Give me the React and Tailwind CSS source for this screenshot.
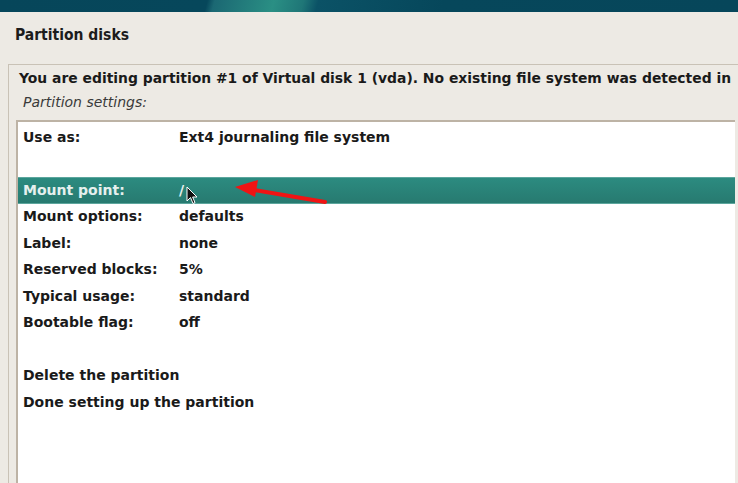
import React from "react";

const rows = [
  { label: "Use as:", value: "Ext4 journaling file system" },
  { label: "", value: "" },
  { label: "Mount point:", value: "/", selected: true },
  { label: "Mount options:", value: "defaults" },
  { label: "Label:", value: "none" },
  { label: "Reserved blocks:", value: "5%" },
  { label: "Typical usage:", value: "standard" },
  { label: "Bootable flag:", value: "off" },
  { label: "", value: "" },
  { label: "Delete the partition", value: "" },
  { label: "Done setting up the partition", value: "" },
];

const Cursor = () => (
  <svg width="12" height="19" viewBox="0 0 12 19" className="absolute left-[186px] top-[186px]">
    <path d="M1 1 L1 15 L4.5 11.5 L7 17.5 L9 16.6 L6.6 11 L11 11 Z" fill="#111" stroke="#fff" strokeWidth="1" />
  </svg>
);

const Arrow = () => (
  <svg width="110" height="30" viewBox="0 0 110 30" className="absolute left-[230px] top-[178px]">
    <path d="M95 24 L24 12" stroke="#f01414" strokeWidth="4" strokeLinecap="round" />
    <path d="M5 9 L28 2 L25 19 Z" fill="#f01414" />
  </svg>
);

export default function App() {
  return (
    <div className="relative w-[738px] h-[483px] overflow-hidden bg-[#edeae4] font-['DejaVu_Sans','Liberation_Sans',sans-serif] text-[14px] text-[#1a1a1a]">
      {/* top banner strip */}
      <div className="h-[12px] bg-[linear-gradient(105deg,#06465a_0%,#06475b_28%,#1b6873_29%,#2a8f84_37%,#1f7677_41%,#0b5266_43%,#06475b_60%,#06465a_100%)]" />
      <div className="h-[7px] bg-[#edeae4]" />

      <div className="pl-[15px] h-[34px] flex items-center font-['DejaVu_Sans_Condensed','DejaVu_Sans',sans-serif] [font-stretch:condensed] font-bold text-[15.5px] text-[#1c1c1c]">
        Partition disks
      </div>

      <div className="ml-[8px] mt-[11px] border-t border-l border-[#c9c2b6] h-[420px] flex flex-col">
        <div className="pl-[10px] pt-[4px] font-bold whitespace-nowrap leading-[19px] text-[13.9px]">
          You are editing partition #1 of Virtual disk 1 (vda). No existing file system was detected in
        </div>
        <div className="pl-[14px] pt-[6px] italic text-[#3a3a3a] leading-[17px]">Partition settings:</div>
        <div className="ml-[7px] mr-[3px] mt-[9px] flex-1 bg-white border-t-2 border-l-2 border-[#bdb3a5] pt-[2px]">
          {rows.map((r, i) => (
            <div
              key={i}
              className={
                r.selected
                  ? "h-[26.5px] flex items-center font-bold text-[#e6f0ee] bg-[linear-gradient(#2c8b80,#277a70)] border-t border-b border-[#5ca69d]"
                  : "h-[26.5px] flex items-center font-bold"
              }
            >
              <span className="pl-[5px] w-[161px] whitespace-nowrap">{r.label}</span>
              <span className="whitespace-nowrap">{r.value}</span>
            </div>
          ))}
        </div>
      </div>

      <Arrow />
      <Cursor />
    </div>
  );
}
